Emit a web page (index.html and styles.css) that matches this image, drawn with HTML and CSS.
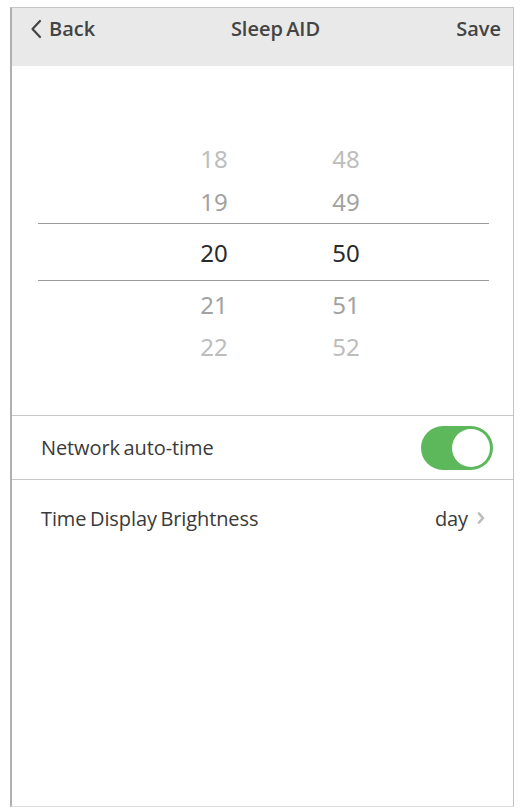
FILE: index.html
```html
<!DOCTYPE html>
<html>
<head>
<meta charset="utf-8">
<link rel="stylesheet" href="styles.css">
</head>
<body>
<div class="frame">
  <div class="header">
    <div class="back">
      <svg class="back-icon" width="12" height="20" viewBox="0 0 12 20"><path d="M10 2 L2.5 10 L10 18" fill="none" stroke="#444" stroke-width="2.2" stroke-linecap="round" stroke-linejoin="round"/></svg>
      <span>Back</span>
    </div>
    <div class="title">Sleep AID</div>
    <div class="save">Save</div>
  </div>
  <div class="picker">
    <div class="prow far"><span>18</span><span>48</span></div>
    <div class="prow near"><span>19</span><span>49</span></div>
    <div class="prow sel"><span>20</span><span>50</span></div>
    <div class="prow near low"><span>21</span><span>51</span></div>
    <div class="prow far"><span>22</span><span>52</span></div>
  </div>
  <div class="row sep">
    <span class="label">Network auto-time</span>
    <div class="toggle"><div class="knob"></div></div>
  </div>
  <div class="row bright">
    <span class="label">Time Display Brightness</span>
    <span class="value">day
      <svg class="chev" width="8" height="12" viewBox="0 0 8 12"><path d="M2 1.5 L6 6 L2 10.5" fill="none" stroke="#bbb" stroke-width="2.6" stroke-linecap="round" stroke-linejoin="round"/></svg>
    </span>
  </div>
</div>
</body>
</html>
```
FILE: styles.css
```css
html, body {
  margin: 0;
  padding: 0;
  background: #fff;
}
body {
  font-family: "Open Sans", "Noto Sans", sans-serif;
  color: #333;
}
.frame {
  margin: 7px 10px 0 10px;
  height: 800px;
  border: 1px solid #c4c4c4;
  border-left: 2px solid #b0b0b0;
  border-bottom: 1px solid #ddd;
  box-sizing: border-box;
  display: flex;
  flex-direction: column;
}
.header {
  height: 58px;
  background: #e9e9e9;
  display: flex;
  align-items: flex-start;
  justify-content: space-between;
  padding: 8px 12px 0 18px;
  font-size: 20px;
  line-height: 26px;
  font-weight: 600;
  color: #444;
  box-sizing: border-box;
  word-spacing: -2px;
}
.back {
  display: flex;
  align-items: center;
  gap: 7px;
  width: 110px;
}
.title {
  flex: 0 0 auto;
}
.save {
  width: 90px;
  text-align: right;
}
.picker {
  height: 350px;
  padding-top: 71px;
  box-sizing: border-box;
  border-bottom: 1px solid #c8c8c8;
}
.prow {
  height: 43px;
  margin: 0 24px 0 26px;
  padding-left: 136px;
  display: grid;
  grid-template-columns: 80px 80px;
  column-gap: 52px;
  align-items: center;
  font-size: 24px;
  font-family: "Noto Sans", "Open Sans", sans-serif;
}
.prow span {
  text-align: center;
}
.prow.far { color: #bdbdbd; }
.prow.near { color: #a2a2a2; }
.prow.sel {
  height: 56px;
  color: #2a2a2a;
  border-top: 1.5px solid #9a9a9a;
  border-bottom: 1.5px solid #9a9a9a;
}
.prow.low {
  padding-top: 2px;
  box-sizing: border-box;
  height: 44px;
}
.row {
  display: flex;
  align-items: center;
  justify-content: space-between;
  padding: 0 20px 0 29px;
  font-size: 20px;
  word-spacing: -1.5px;
  letter-spacing: -0.1px;
  color: #3a3a3a;
}
.row.sep {
  height: 63px;
  border-bottom: 1px solid #c8c8c8;
}
.row.bright {
  height: 76px;
  padding-right: 28px;
}
.toggle {
  width: 72px;
  height: 44px;
  border-radius: 22px;
  background: #5cb85a;
  display: flex;
  align-items: center;
  justify-content: flex-end;
  padding: 3px;
  box-sizing: border-box;
}
.knob {
  width: 38px;
  height: 38px;
  border-radius: 50%;
  background: #fff;
}
.value {
  display: flex;
  align-items: center;
  gap: 9px;
}
```
